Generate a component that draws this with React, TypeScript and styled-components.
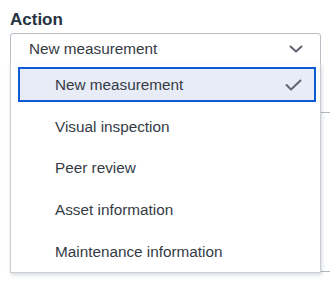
import React from "react";
import styled, { createGlobalStyle } from "styled-components";

const Global = createGlobalStyle`
  html, body { margin: 0; padding: 0; background: #ffffff; overflow: hidden; }
  body { font-family: "Liberation Sans", Arial, sans-serif; }
`;

const Page = styled.div`
  width: 330px;
  height: 287px;
  padding: 10px 0 0 10px;
  box-sizing: border-box;
  position: relative;
  overflow: hidden;
`;

const Label = styled.div`
  font-size: 17px;
  line-height: 20px;
  font-weight: 700;
  color: #263242;
`;

const Field = styled.div`
  position: relative;
  width: 311px;
  margin-top: 3px;
`;

const Select = styled.div`
  box-sizing: border-box;
  height: 31px;
  border: 1px solid #b9bdc5;
  border-radius: 3px 3px 0 0;
  display: flex;
  align-items: center;
  justify-content: space-between;
  padding: 0 17px 0 18px;
  font-size: 15.3px;
  color: #343a45;
`;

const Menu = styled.ul`
  position: absolute;
  top: 30px;
  left: 0;
  width: 311px;
  box-sizing: border-box;
  margin: 0;
  padding: 0;
  list-style: none;
  background: #ffffff;
  border: 1px solid #c9ccd3;
  border-top: none;
  box-shadow: 1px 2px 4px rgba(40, 50, 70, 0.18);
  z-index: 2;
`;

const Item = styled.li<{ $selected?: boolean }>`
  box-sizing: border-box;
  height: ${(p) => (p.$selected ? "35px" : "41.6px")};
  margin: ${(p) => (p.$selected ? "4px 4px 4px 7px" : "0")};
  display: flex;
  align-items: center;
  justify-content: space-between;
  padding: ${(p) => (p.$selected ? "0 12px 0 35px" : "0 16px 0 44px")};
  font-size: 15.3px;
  color: #353b46;
  background: ${(p) => (p.$selected ? "#e7ecf7" : "transparent")};
  border: ${(p) => (p.$selected ? "2px solid #0c5ad4" : "none")};
`;

const Behind = styled.div`
  margin-top: 48px;
  width: 320px;
  height: 158px;
  border-top: 1px solid #b3b7bf;
  border-bottom: 1px solid #b3b7bf;
`;

const Chevron = () => (
  <svg width="14" height="8" viewBox="0 0 14 8" fill="none">
    <path d="M1.5 1.5 L7 6.5 L12.5 1.5" stroke="#5d6470" strokeWidth="2" strokeLinecap="round" strokeLinejoin="round" />
  </svg>
);

const Check = () => (
  <svg width="17" height="12" viewBox="0 0 17 12" fill="none">
    <path d="M1.5 6 L6 10.5 L15.5 1.5" stroke="#5f6672" strokeWidth="2" strokeLinecap="round" strokeLinejoin="round" />
  </svg>
);

const options = [
  "New measurement",
  "Visual inspection",
  "Peer review",
  "Asset information",
  "Maintenance information",
];

export default function App() {
  const selected = 0;
  return (
    <Page>
      <Global />
      <Label>Action</Label>
      <Field>
        <Select>
          <span>{options[selected]}</span>
          <Chevron />
        </Select>
        <Menu>
          {options.map((o, i) => (
            <Item key={o} $selected={i === selected}>
              <span>{o}</span>
              {i === selected && <Check />}
            </Item>
          ))}
        </Menu>
      </Field>
      <Behind />
    </Page>
  );
}
